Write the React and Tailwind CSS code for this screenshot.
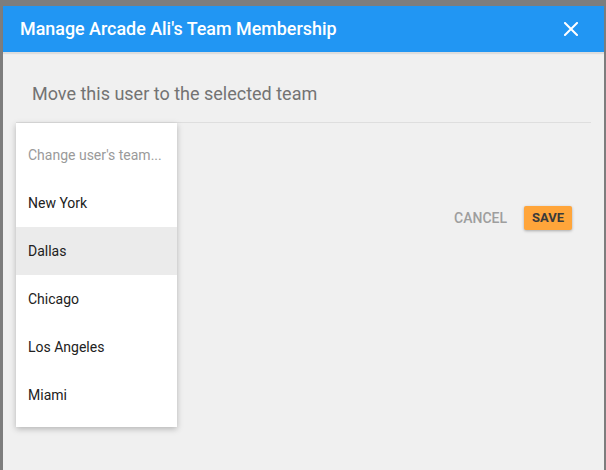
import React, { useState } from 'react';

const teams = ['New York', 'Dallas', 'Chicago', 'Los Angeles', 'Miami'];

const App = () => {
  const [selected, setSelected] = useState('Dallas');

  return (
    <div
      className="h-[470px] w-[606px] overflow-hidden bg-[#7d7d7d] pt-[6px] pl-[3px] pr-[2px]"
      style={{ fontFamily: 'Roboto, "Liberation Sans", sans-serif' }}
    >
      <div className="flex h-[480px] flex-col bg-[#f0f0f0]">
        {/* Header */}
        <div className="relative z-10 flex h-[46px] shrink-0 items-center justify-between bg-[#2196f3] pl-[17px] pr-[26px] shadow-[0_2px_1px_rgba(0,0,0,0.08)]">
          <h1 className="text-[17.9px] font-medium text-white">Manage Arcade Ali's Team Membership</h1>
          <button className="text-white">
            <svg width="14" height="14" viewBox="0 0 14 14">
              <path d="M1 1L13 13M13 1L1 13" stroke="white" strokeWidth="2" strokeLinecap="square" />
            </svg>
          </button>
        </div>

        {/* Body */}
        <div className="px-[13px]">
          <div className="border-b border-[#dedede] pl-[16px] pt-[29px] pb-[15px] text-[18px] leading-[26px] text-[#737373]">
            Move this user to the selected team
          </div>

          <div className="flex">
            <div className="w-[161px] bg-white py-[8px] shadow-[0_2px_6px_rgba(0,0,0,0.25)]">
              <div className="flex h-[48px] items-center px-[12px] text-[14px] text-[#9a9a9a]">
                Change user's team...
              </div>
              {teams.map((team) => (
                <div
                  key={team}
                  onClick={() => setSelected(team)}
                  className={`flex h-[48px] cursor-pointer items-center px-[12px] text-[14px] text-[#212121] ${
                    selected === team ? 'bg-[#ebebeb]' : 'bg-white'
                  }`}
                >
                  {team}
                </div>
              ))}
            </div>

            <div className="flex flex-1 items-start justify-end gap-[17px] pt-[83px] pr-[19px]">
              <button className="h-[24px] text-[14px] font-medium text-[#9e9e9e]">CANCEL</button>
              <button className="h-[24px] w-[48px] rounded-[2px] bg-[#ffa53a] text-[13px] font-bold text-[#3a3a3a] shadow-[0_1px_3px_rgba(0,0,0,0.3)]">
                SAVE
              </button>
            </div>
          </div>
        </div>
      </div>
    </div>
  );
};

export default App;
